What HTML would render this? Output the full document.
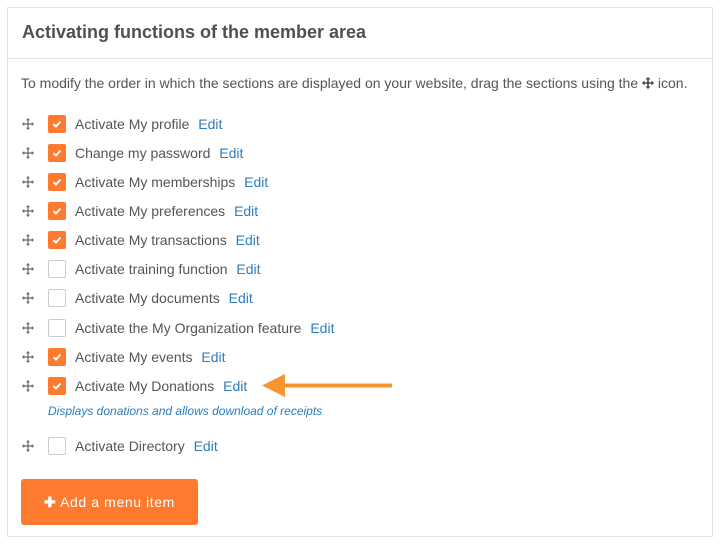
<!DOCTYPE html>
<html><head><meta charset="utf-8"><style>
body{margin:0;width:723px;height:545px;background:#fff;font-family:"Liberation Sans",sans-serif;position:relative;overflow:hidden}
.panel{position:absolute;left:7px;top:7px;width:706px;height:530px;border:1px solid #e3e3e3;box-sizing:border-box}
.hdr{position:absolute;left:0;top:0;right:0;height:50px;border-bottom:1px solid #e3e3e3}
.hdr h1{margin:0;position:absolute;left:14px;top:14px;font-size:18px;font-weight:bold;color:#505050}
.intro{position:absolute;left:21px;top:75px;font-size:14px;color:#555}
.row{position:absolute;left:0;height:18px;font-size:14px;color:#555;line-height:19px;white-space:nowrap}
.mv{position:absolute;left:22px;top:3px}
.cb{position:absolute;left:48px;top:0;width:18px;height:18px;box-sizing:border-box;border-radius:2px}
.on{background:#fd7a2e}
.off{border:1px solid #c8ccd3;background:#fff}
.lbl{position:absolute;left:75px;top:0}
.lbl a{color:#2d7dbf;margin-left:5px}
.sub{position:absolute;left:48px;top:404px;font-size:12px;font-style:italic;color:#2d7dbf}
.btn{position:absolute;left:21px;top:479px;width:177px;height:46px;background:#fd7a2e;border-radius:3px;color:#fff;font-size:14px;letter-spacing:.6px;line-height:46px;text-align:center}
</style></head><body>
<div class="panel"><div class="hdr"><h1>Activating functions of the member area</h1></div></div>
<div class="intro">To modify the order in which the sections are displayed on your website, drag the sections using the <svg width="12" height="12" viewBox="0 0 12 12" style="vertical-align:-1px"><path d="M6 0L8.5 2.5H6.8V5.2H9.5V3.5L12 6L9.5 8.5V6.8H6.8V9.5H8.5L6 12L3.5 9.5H5.2V6.8H2.5V8.5L0 6L2.5 3.5V5.2H5.2V2.5H3.5Z" fill="#444"/></svg> icon.</div>

<svg width="0" height="0" style="position:absolute"><defs><symbol id="m" viewBox="0 0 12 12"><path d="M6 0L8 2.2H6.6V5.4H9.8V4L12 6L9.8 8V6.6H6.6V9.8H8L6 12L4 9.8H5.4V6.6H2.2V8L0 6L2.2 4V5.4H5.4V2.2H4Z" fill="#666"/></symbol>
<symbol id="c" viewBox="0 0 18 18"><path d="M5.5 9.2L8 11.5L12.5 6.5" stroke="#fff" stroke-width="2" fill="none"/></symbol></defs></svg>

<div class="row" style="top:115px;width:723px"><svg class="mv" width="12" height="12"><use href="#m"/></svg><div class="cb on"><svg width="18" height="18"><use href="#c"/></svg></div><div class="lbl">Activate My profile <a>Edit</a></div></div>
<div class="row" style="top:144px;width:723px"><svg class="mv" width="12" height="12"><use href="#m"/></svg><div class="cb on"><svg width="18" height="18"><use href="#c"/></svg></div><div class="lbl">Change my password <a>Edit</a></div></div>
<div class="row" style="top:173px;width:723px"><svg class="mv" width="12" height="12"><use href="#m"/></svg><div class="cb on"><svg width="18" height="18"><use href="#c"/></svg></div><div class="lbl">Activate My memberships <a>Edit</a></div></div>
<div class="row" style="top:202px;width:723px"><svg class="mv" width="12" height="12"><use href="#m"/></svg><div class="cb on"><svg width="18" height="18"><use href="#c"/></svg></div><div class="lbl">Activate My preferences <a>Edit</a></div></div>
<div class="row" style="top:231px;width:723px"><svg class="mv" width="12" height="12"><use href="#m"/></svg><div class="cb on"><svg width="18" height="18"><use href="#c"/></svg></div><div class="lbl">Activate My transactions <a>Edit</a></div></div>
<div class="row" style="top:260px;width:723px"><svg class="mv" width="12" height="12"><use href="#m"/></svg><div class="cb off"></div><div class="lbl">Activate training function <a>Edit</a></div></div>
<div class="row" style="top:289px;width:723px"><svg class="mv" width="12" height="12"><use href="#m"/></svg><div class="cb off"></div><div class="lbl">Activate My documents <a>Edit</a></div></div>
<div class="row" style="top:319px;width:723px"><svg class="mv" width="12" height="12"><use href="#m"/></svg><div class="cb off"></div><div class="lbl">Activate the My Organization feature <a>Edit</a></div></div>
<div class="row" style="top:348px;width:723px"><svg class="mv" width="12" height="12"><use href="#m"/></svg><div class="cb on"><svg width="18" height="18"><use href="#c"/></svg></div><div class="lbl">Activate My events <a>Edit</a></div></div>
<div class="row" style="top:377px;width:723px"><svg class="mv" width="12" height="12"><use href="#m"/></svg><div class="cb on"><svg width="18" height="18"><use href="#c"/></svg></div><div class="lbl">Activate My Donations <a>Edit</a></div></div>
<div class="sub">Displays donations and allows download of receipts</div>
<div class="row" style="top:437px;width:723px"><svg class="mv" width="12" height="12"><use href="#m"/></svg><div class="cb off"></div><div class="lbl">Activate Directory <a>Edit</a></div></div>

<svg style="position:absolute;left:258px;top:372px" width="140" height="28"><path d="M4 13.5L27 2V11.5H134V15.5H27V25Z" fill="#f7952f"/></svg>

<div class="btn"><b>✚</b> Add a menu item</div>
</body></html>
